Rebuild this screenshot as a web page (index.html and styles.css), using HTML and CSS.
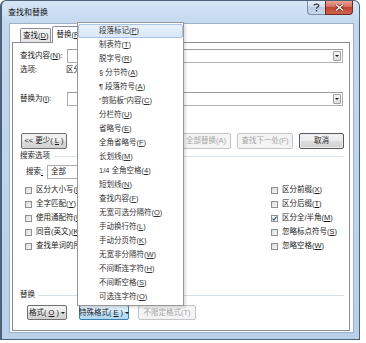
FILE: index.html
```html
<!DOCTYPE html>
<html lang="zh-CN">
<head>
<meta charset="utf-8">
<title>查找和替换</title>
<link rel="stylesheet" href="styles.css">
</head>
<body>
<div class="window">
  <div class="titlebar">
    <span class="title">查找和替换</span>
    <div class="caption">
      <span class="cap-help"><svg width="7" height="9" viewBox="0 0 7 9"><path d="M1.2 2.6 C1.2 0.6 5.8 0.6 5.8 2.6 C5.8 4 3.5 4.1 3.5 5.8" fill="none" stroke="#3a3a3a" stroke-width="1.3"/><rect x="2.8" y="7" width="1.4" height="1.4" fill="#3a3a3a"/></svg></span>
      <span class="cap-close"><svg width="9" height="7" viewBox="0 0 9 7"><path d="M1 0.5 L8 6.5 M8 0.5 L1 6.5" stroke="#5a1a12" stroke-width="2.6"/><path d="M1 0.5 L8 6.5 M8 0.5 L1 6.5" stroke="#fff" stroke-width="1.4"/></svg></span>
    </div>
  </div>
  <div class="client">
    <div class="tabs">
      <div class="tab">查找(<u>D</u>)</div>
      <div class="tab active">替换(<u>P</u>)</div>
    </div>
    <div class="panel">
      <div class="row field find">
        <span class="label">查找内容(<u>N</u>):</span>
        <div class="combo"><span class="dd"><i class="tri"></i></span></div>
      </div>
      <div class="row opts">
        <span class="label opt-label">选项:</span>
        <span>区分全/半角</span>
      </div>
      <div class="row field repl">
        <span class="label">替换为(<u>I</u>):</span>
        <div class="combo"><span class="dd"><i class="tri"></i></span></div>
      </div>
      <div class="row btnrow">
        <span class="btn less">&lt;&lt; 更少(<u>L</u>)</span>
        <div class="btn-group">
          <span class="btn disabled w50">全部替换(A)</span>
          <span class="btn disabled w56">查找下一处(F)</span>
          <span class="btn default w45">取消</span>
        </div>
      </div>
      <div class="group-title first">搜索选项</div>
      <div class="row search">
        <span class="label search-label">搜索<u>:</u></span>
        <div class="select">全部</div>
      </div>
      <div class="checks">
        <div class="check"><i class="box"></i>区分大小写(<u>H</u>)</div>
        <div class="check"><i class="box"></i>区分前缀(<u>X</u>)</div>
        <div class="check"><i class="box"></i>全字匹配(<u>Y</u>)</div>
        <div class="check"><i class="box"></i>区分后缀(<u>T</u>)</div>
        <div class="check"><i class="box"></i>使用通配符(<u>U</u>)</div>
        <div class="check"><i class="box checked"><svg width="5" height="5" viewBox="0 0 5 5"><path d="M0.5 2.6 L1.9 4.1 L4.6 0.6" fill="none" stroke="#2d4f86" stroke-width="1.1"/></svg></i>区分全/半角(<u>M</u>)</div>
        <div class="check"><i class="box"></i>同音(英文)(<u>K</u>)</div>
        <div class="check"><i class="box"></i>忽略标点符号(<u>S</u>)</div>
        <div class="check"><i class="box"></i>查找单词的所有形式(英文)(<u>W</u>)</div>
        <div class="check"><i class="box"></i>忽略空格(<u>W</u>)</div>
      </div>
      <div class="group-title second">替换</div>
      <div class="row btnrow bottom">
        <span class="btn fmt">格式(<u>O</u>) <i class="tri"></i></span>
        <span class="btn special">特殊格式(<u>E</u>) <i class="tri"></i></span>
        <span class="btn disabled nofmt">不限定格式(T)</span>
      </div>
    </div>
  </div>
  <ul class="menu">
    <li class="hot">段落标记(<u>P</u>)</li>
    <li>制表符(<u>T</u>)</li>
    <li>脱字号(<u>R</u>)</li>
    <li>§ 分节符(<u>A</u>)</li>
    <li>¶ 段落符号(<u>A</u>)</li>
    <li>“剪贴板”内容(<u>C</u>)</li>
    <li>分栏符(<u>U</u>)</li>
    <li>省略号(<u>E</u>)</li>
    <li>全角省略号(<u>F</u>)</li>
    <li>长划线(<u>M</u>)</li>
    <li>1/4 全角空格(<u>4</u>)</li>
    <li>短划线(<u>N</u>)</li>
    <li>查找内容(<u>F</u>)</li>
    <li>无宽可选分隔符(<u>O</u>)</li>
    <li>手动换行符(<u>L</u>)</li>
    <li>手动分页符(<u>K</u>)</li>
    <li>无宽非分隔符(<u>W</u>)</li>
    <li>不间断连字符(<u>H</u>)</li>
    <li>不间断空格(<u>S</u>)</li>
    <li>可选连字符(<u>O</u>)</li>
  </ul>
</div>
</body>
</html>
```
FILE: styles.css
```css
* { box-sizing: border-box; margin: 0; padding: 0; }
html, body { background: #fff; }
body {
  width: 366px; height: 343px; overflow: hidden;
  font-family: "Liberation Sans", "Noto Sans CJK SC", sans-serif;
  font-size: 7.5px; color: #1b1b1b; line-height: 10px;
}
u { text-decoration: underline; text-underline-offset: 1px; }

.window {
  position: relative;
  width: 360px; height: 340px;
  border: 1px solid #4d6178; border-left-width: 2px;
  border-radius: 6px 6px 0 0;
  background: linear-gradient(to bottom, #d7e6f6 0, #c3d8ef 22px, #b9d0ea 100%);
  padding: 0 5px 6px 7px;
  display: flex; flex-direction: column;
}
.titlebar { height: 22px; display: flex; align-items: flex-start; }
.title { font-size: 8px; margin: 7px 0 0 -1px; line-height: 10px; color: #111; }
.caption { margin-left: auto; margin-right: 1px; display: flex; }
.cap-help, .cap-close { height: 14px; display: flex; align-items: center; justify-content: center; }
.cap-help {
  width: 18px; border: 1px solid #7a8da6; border-top: none; border-right: none;
  border-radius: 0 0 0 4px;
  background: linear-gradient(#e6eef8, #cfdcec 50%, #bccde2 50%, #c9d8ea);
}
.cap-close {
  width: 28px; border: 1px solid #6d2a22; border-top: none;
  border-radius: 0 0 4px 0;
  background: linear-gradient(#e8a597, #d36f5e 45%, #c14532 50%, #d0624d);
}

.client {
  flex: 1; background: #fff; border: 1px solid #9fb1c6;
  padding: 0 3px 1px 2px;
  display: flex; flex-direction: column;
}
.tabs { height: 18px; display: flex; align-items: flex-end; padding-left: 8px; position: relative; z-index: 1; }
.tab {
  height: 14px; border: 1px solid #898c95; border-bottom: none;
  background: linear-gradient(#f7f7f7, #e4e4e4);
  padding: 0 2px; line-height: 13px; border-radius: 2px 2px 0 0; white-space: nowrap;
}
.tab.active {
  height: 17px; margin-bottom: -1px; margin-left: 1px; background: #fff;
  padding: 0 3px; line-height: 15px;
}

.panel {
  flex: 1; border: 1px solid #898c95; background: #fff;
  padding: 0 5px 0 7px;
  display: flex; flex-direction: column;
}
.row { display: flex; align-items: center; white-space: nowrap; }
.field { height: 14px; }
.find { margin-top: 6px; }
.label { flex: none; width: 47px; }
.opt-label { width: 46px; }
.opts { margin-top: 2px; height: 10px; }
.repl { margin-top: 17px; }
.combo {
  flex: 1; height: 14px; margin-right: 1px;
  border: 1px solid #abadb3; border-top-color: #9a9ca3;
  display: flex; align-items: center; justify-content: flex-end; padding-right: 1px;
}
.dd {
  width: 8px; height: 10px; border: 1px solid #a0a0a0; border-radius: 1px;
  background: linear-gradient(#f6f6f6, #dedede);
  display: flex; align-items: center; justify-content: center;
}
.tri {
  display: inline-block; width: 0; height: 0;
  border-left: 2px solid transparent; border-right: 2px solid transparent;
  border-top: 2px solid #1a1a1a; vertical-align: middle;
}

.btnrow { margin-top: 27px; height: 16px; }
.btn {
  height: 100%; display: inline-flex; align-items: center; justify-content: center; gap: 2px;
  border: 1px solid #707070; border-radius: 2px;
  background: linear-gradient(#f3f3f3 0, #ebebeb 50%, #dddddd 50%, #d1d1d1 100%);
  white-space: nowrap;
}
.less { width: 46px; margin-left: 1px; }
.btn-group { margin-left: auto; display: flex; gap: 6px; height: 100%; }
.w45 { width: 45px; }
.w50 { width: 50px; }
.w56 { width: 56px; }
.btn.disabled { border-color: #c3c6c9; background: #f4f4f4; color: #a6a6a6; }
.btn.default { border-color: #5a5a5a; box-shadow: inset 0 0 0 1px #e8eef4; }

.group-title { display: flex; align-items: center; height: 10px; white-space: nowrap; }
.group-title::after { content: ""; flex: 1; height: 1px; background: #d5dfe5; margin-left: 4px; }
.group-title.first { margin-top: 2px; }
.group-title.second { margin-top: 37px; }

.search { margin-top: 4px; height: 14px; padding-left: 6px; }
.search-label { width: 21px; }
.select { width: 120px; height: 14px; border: 1px solid #abadb3; padding-left: 3px; line-height: 12px; }

.checks { margin-top: 4px; display: grid; grid-template-columns: 246px 1fr; grid-auto-rows: 14px; padding-left: 5px; }
.check { display: flex; align-items: center; white-space: nowrap; overflow: hidden; }
.box {
  flex: none; width: 7px; height: 7px; margin-right: 4px;
  border: 1px solid #8e8f8f;
  background: linear-gradient(135deg, #dcdcdc, #f6f6f6);
  display: flex; align-items: center; justify-content: center;
}
.box.checked { background: #f4f6f9; }

.bottom { margin-top: 5px; height: 15px; }
.fmt { width: 40px; margin-left: 7px; }
.special {
  width: 50px; margin-left: 12px;
  border-color: #3c7fb1;
  background: linear-gradient(#e6f3fc 0, #d6ebfa 50%, #bfe0f6 50%, #b0d8f3 100%);
}
.nofmt { width: 58px; margin-left: 9px; }

.menu {
  position: absolute; left: 75px; top: 21px;
  width: 107px; list-style: none;
  border: 1px solid #979797; background: #fff;
  padding: 1px 0;
  box-shadow: 2px 2px 2px rgba(0, 0, 0, 0.12);
  z-index: 5;
}
.menu li {
  height: 14px; line-height: 12px; padding-left: 20px;
  border: 1px solid transparent; color: #333; white-space: nowrap;
}
.menu li.hot {
  background: linear-gradient(#e9f1fb, #d9e6f6);
  border-color: #a9c3e6; border-radius: 2px;
}
```
